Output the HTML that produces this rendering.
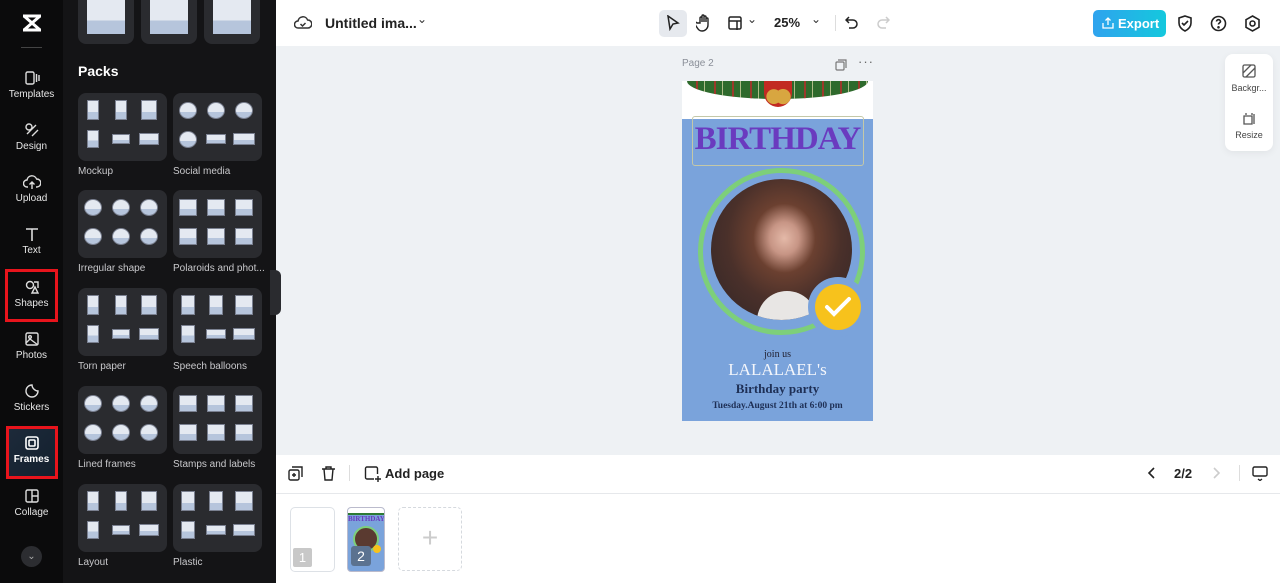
<!DOCTYPE html>
<html><head><meta charset="utf-8"><style>
*{box-sizing:border-box;margin:0;padding:0}
body{width:1280px;height:583px;overflow:hidden;font-family:"Liberation Sans",sans-serif;background:#fff;position:relative}
.rail{position:absolute;left:0;top:0;width:63px;height:583px;background:#0b0b0c}
.panel{position:absolute;left:63px;top:0;width:213px;height:583px;background:#141416}
.ri{position:absolute;left:0;width:63px;text-align:center;color:#e6e6e6;font-size:10px}
.ri svg{display:block;margin:0 auto 3px}
.card{position:absolute;width:89px;height:68px;background:#2a2b2f;border-radius:8px}
.lbl{position:absolute;color:#c9c9cc;font-size:10px;white-space:nowrap}
.m{position:absolute;background:linear-gradient(#e4e9f1 60%,#b6c5dc 60%);border:1px solid #7a8090}
.top{position:absolute;left:276px;top:0;width:1004px;height:46px;background:#fff}
.canvas{position:absolute;left:276px;top:46px;width:1004px;height:409px;background:#eef1f4}
.ic{position:absolute}
</style></head><body>
<div class="rail">
 <div class="ri" style="top:12px"><svg width="24" height="22" viewBox="0 0 24 22"><path d="M3 4h18M3 18h18M4 4l16 14M20 4L4 18" stroke="#fff" stroke-width="3" fill="none"/></svg></div>
 <div style="position:absolute;left:21px;top:47px;width:21px;height:1px;background:#444"></div>
 <div class="ri" style="top:70px"><svg width="16" height="16" viewBox="0 0 16 16" fill="none" stroke="#ddd" stroke-width="1.4"><rect x="2" y="2" width="8" height="12" rx="1.5"/><path d="M12.5 4v8M15 5v6"/></svg>Templates</div>
 <div class="ri" style="top:122px"><svg width="16" height="16" viewBox="0 0 16 16" fill="none" stroke="#ddd" stroke-width="1.4"><circle cx="5" cy="5" r="3"/><path d="M8 14l6-6M3 12l9-9"/></svg>Design</div>
 <div class="ri" style="top:174px"><svg width="18" height="16" viewBox="0 0 18 16" fill="none" stroke="#ddd" stroke-width="1.4"><path d="M5 13H4a3.5 3.5 0 010-7 5 5 0 019.6-1A3.5 3.5 0 0114 13h-1M9 8v7M6.5 10.5L9 8l2.5 2.5"/></svg>Upload</div>
 <div class="ri" style="top:226px"><svg width="16" height="16" viewBox="0 0 16 16" fill="none" stroke="#ddd" stroke-width="1.6"><path d="M2 3h12M8 3v12"/></svg>Text</div>
 <div style="position:absolute;left:5px;top:269px;width:53px;height:53px;border:3px solid #e8141c"></div>
 <div class="ri" style="top:279px"><svg width="16" height="16" viewBox="0 0 16 16" fill="none" stroke="#ddd" stroke-width="1.4"><circle cx="6" cy="6" r="3.5"/><path d="M10 3h4v6M8 14l3-6 3 6z"/></svg>Shapes</div>
 <div class="ri" style="top:331px"><svg width="16" height="16" viewBox="0 0 16 16" fill="none" stroke="#ddd" stroke-width="1.4"><rect x="2" y="2" width="12" height="12" rx="1.5"/><circle cx="6" cy="6" r="1.3"/><path d="M2 12l4-4 8 6"/></svg>Photos</div>
 <div class="ri" style="top:383px"><svg width="16" height="16" viewBox="0 0 16 16" fill="none" stroke="#ddd" stroke-width="1.4"><path d="M14 8a6 6 0 11-6-6c0 3 3 6 6 6z"/></svg>Stickers</div>
 <div style="position:absolute;left:6px;top:426px;width:52px;height:53px;border:3px solid #e8141c;background:linear-gradient(135deg,#1d2a3a,#13202e)"></div>
 <div class="ri" style="top:435px;color:#fff;font-weight:bold"><svg width="16" height="16" viewBox="0 0 16 16" fill="none" stroke="#fff" stroke-width="1.6"><rect x="2" y="2" width="12" height="12" rx="2"/><rect x="5" y="5" width="6" height="6" rx="1"/></svg>Frames</div>
 <div class="ri" style="top:488px"><svg width="16" height="16" viewBox="0 0 16 16" fill="none" stroke="#ddd" stroke-width="1.4"><rect x="2" y="2" width="12" height="12" rx="1.5"/><path d="M8 2v12M8 8h6"/></svg>Collage</div>
 <div style="position:absolute;left:21px;top:546px;width:21px;height:21px;border-radius:50%;background:#2c2d31;color:#aaa;font-size:10px;text-align:center;line-height:21px">⌄</div>
</div>
<div class="panel">
 <div class="card" style="left:15px;top:-24px;width:56px"></div><div class="card" style="left:78px;top:-24px;width:56px"></div><div class="card" style="left:141px;top:-24px;width:56px"></div>
 <div class="m" style="left:24px;top:0;width:38px;height:34px;border:none"></div><div class="m" style="left:87px;top:0;width:38px;height:34px;border:none"></div><div class="m" style="left:150px;top:0;width:38px;height:34px;border:none"></div>
 <div style="position:absolute;left:15px;top:63px;color:#fff;font-weight:bold;font-size:14px">Packs</div>
 <div id="cards"></div>
</div>
<div class="top">
 <svg class="ic" style="left:18px;top:15px" width="18" height="16" viewBox="0 0 18 16" fill="none" stroke="#333" stroke-width="1.5"><path d="M5 13H4a3.5 3.5 0 010-7 5 5 0 019.6-1A3.5 3.5 0 0114 13zM6.5 9l2 2 3-3"/></svg>
 <div style="position:absolute;left:49px;top:15px;font-size:14px;font-weight:bold;color:#222">Untitled ima...</div>
 <div style="position:absolute;left:141px;top:12px;font-size:12px;color:#333">⌄</div>
 <div style="position:absolute;left:383px;top:10px;width:28px;height:27px;background:#e6e9ee;border-radius:5px"></div>
 <svg class="ic" style="left:390px;top:15px" width="14" height="16" viewBox="0 0 14 16" fill="none" stroke="#222" stroke-width="1.5"><path d="M2 1l10 7-5 1-3 5z"/></svg>
 <svg class="ic" style="left:420px;top:14px" width="16" height="18" viewBox="0 0 16 18" fill="none" stroke="#222" stroke-width="1.4"><path d="M4 9V4a1 1 0 012 0v4V2a1 1 0 012 0v6V3a1 1 0 012 0v5V5a1 1 0 012 0v6a6 6 0 01-6 6c-3 0-4-2-6-5l-1-2a1 1 0 012-1z"/></svg>
 <svg class="ic" style="left:452px;top:16px" width="14" height="14" viewBox="0 0 14 14" fill="none" stroke="#222" stroke-width="1.5"><rect x="1" y="1" width="12" height="12" rx="1.5"/><path d="M1 5h12M9 5v13"/></svg>
 <div style="position:absolute;left:471px;top:12px;font-size:12px;color:#333">⌄</div>
 <div style="position:absolute;left:498px;top:15px;font-size:13px;font-weight:bold;color:#222">25%</div>
 <div style="position:absolute;left:535px;top:12px;font-size:12px;color:#333">⌄</div>
 <div style="position:absolute;left:559px;top:15px;width:1px;height:16px;background:#ddd"></div>
 <svg class="ic" style="left:569px;top:16px" width="14" height="14" viewBox="0 0 14 14" fill="none" stroke="#222" stroke-width="1.5"><path d="M4 1L1 4l3 3M1 4h7a4 4 0 010 8H4"/></svg>
 <svg class="ic" style="left:600px;top:16px" width="14" height="14" viewBox="0 0 14 14" fill="none" stroke="#ccc" stroke-width="1.5"><path d="M10 1l3 3-3 3M13 4H6a4 4 0 000 8h4"/></svg>
 <div style="position:absolute;left:817px;top:10px;width:73px;height:27px;border-radius:5px;background:linear-gradient(90deg,#2fa3ee,#14c8dd);color:#fff;font-weight:bold;font-size:13px;line-height:27px;padding-left:25px">Export</div>
 <svg class="ic" style="left:826px;top:17px" width="12" height="12" viewBox="0 0 12 12" fill="none" stroke="#fff" stroke-width="1.3"><path d="M1 6v5h10V6M6 8V1M3.5 3.5L6 1l2.5 2.5"/></svg>
 <svg class="ic" style="left:901px;top:15px" width="16" height="17" viewBox="0 0 16 17" fill="none" stroke="#222" stroke-width="1.6"><path d="M8 1l6 2v5c0 4-3 6.5-6 8-3-1.5-6-4-6-8V3zM5 8l2 2 4-4"/></svg>
 <svg class="ic" style="left:934px;top:15px" width="17" height="17" viewBox="0 0 17 17" fill="none" stroke="#222" stroke-width="1.6"><circle cx="8.5" cy="8.5" r="7"/><path d="M6.5 6.5a2 2 0 114 .3c-.5 1-2 1.2-2 2.7"/><circle cx="8.5" cy="12.3" r=".5" fill="#222"/></svg>
 <svg class="ic" style="left:968px;top:15px" width="17" height="17" viewBox="0 0 17 17" fill="none" stroke="#222" stroke-width="1.6"><path d="M8.5 1l6.5 3.7v7.6L8.5 16 2 12.3V4.7z"/><circle cx="8.5" cy="8.5" r="2.5"/></svg>
</div>
<div class="canvas">
 <div style="position:absolute;left:406px;top:12px;font-size:10px;color:#8a8f98">Page 2</div>
 <svg class="ic" style="left:559px;top:13px" width="12" height="12" viewBox="0 0 12 12" fill="none" stroke="#777" stroke-width="1.2"><rect x="1" y="3" width="8" height="8" rx="1"/><path d="M3 1h8v8"/></svg>
 <div style="position:absolute;left:582px;top:8px;font-size:13px;color:#666;letter-spacing:1px">···</div>
 <div style="position:absolute;left:406px;top:35px;width:191px;height:340px;background:#7aa3db;overflow:hidden">
  <div style="position:absolute;left:0;top:0;width:191px;height:38px;background:#fff"></div>
  <div style="position:absolute;left:5px;top:0;width:181px;height:18px;background:#2e6a2c;border-radius:0 0 50% 50%/0 0 100% 100%"></div>
  <div style="position:absolute;left:5px;top:0;width:181px;height:18px;background:repeating-linear-gradient(90deg,transparent 0 9px,#c8242a 9px 11px,transparent 11px 17px,#e8e0b0 17px 18px);opacity:.7;border-radius:0 0 50% 50%/0 0 100% 100%"></div>
  <div style="position:absolute;left:82px;top:0;width:28px;height:26px;border-radius:0 0 14px 14px;background:radial-gradient(circle at 35% 60%,#d8a640 0 30%,transparent 32%),radial-gradient(circle at 68% 60%,#d8a640 0 30%,transparent 32%),#c22a22"></div>
  <div style="position:absolute;left:10px;top:35px;width:172px;height:50px;border:1px solid #c4c8a8;border-radius:3px"></div>
  <div style="position:absolute;left:0;top:40px;width:191px;text-align:center;font-family:'Liberation Serif',serif;font-size:33px;font-weight:bold;color:#6a3bbf;letter-spacing:-1px">BIRTHDAY</div>
  <div style="position:absolute;left:16px;top:87px;width:167px;height:167px;border-radius:50%;border:5px solid #7dcf7a"></div>
  <div style="position:absolute;left:29px;top:98px;width:141px;height:141px;border-radius:50%;overflow:hidden;background:radial-gradient(ellipse at 52% 42%,#e4b9a8 0,#c79585 14%,#6b4030 30%,#4a302a 55%,#3b2a28 80%)">
   <div style="position:absolute;left:46px;top:112px;width:60px;height:40px;background:#e8e6e4;border-radius:30px 30px 0 0"></div>
  </div>
  <div style="position:absolute;left:126px;top:196px;width:60px;height:60px;border-radius:50%;background:#7aa3db"></div>
  <div style="position:absolute;left:133px;top:203px;width:46px;height:46px;border-radius:50%;background:#f7c21c"></div>
  <svg class="ic" style="left:142px;top:214px" width="28" height="24" viewBox="0 0 28 24" fill="none" stroke="#fff" stroke-width="4" stroke-linecap="round"><path d="M3 12l7 7L25 4"/></svg>
  <div style="position:absolute;left:0;top:268px;width:191px;text-align:center;font-family:'Liberation Serif',serif;color:#223;font-size:10px">join us</div>
  <div style="position:absolute;left:0;top:279px;width:191px;text-align:center;font-family:'Liberation Serif',serif;color:#f4f6fb;font-size:17px">LALALAEL's</div>
  <div style="position:absolute;left:0;top:300px;width:191px;text-align:center;font-family:'Liberation Serif',serif;color:#1e2f55;font-size:13px;font-weight:bold">Birthday party</div>
  <div style="position:absolute;left:0;top:320px;width:191px;text-align:center;font-family:'Liberation Serif',serif;color:#1e2f55;font-size:9.5px;font-weight:bold">Tuesday.August 21th at 6:00 pm</div>
 </div>
 <div style="position:absolute;left:949px;top:8px;width:48px;height:97px;background:#fff;border-radius:8px;box-shadow:0 2px 8px rgba(0,0,0,.06)"></div>
 <svg class="ic" style="left:966px;top:18px" width="14" height="14" viewBox="0 0 14 14" fill="none" stroke="#555" stroke-width="1.3"><rect x="1" y="1" width="12" height="12" rx="1.5"/><path d="M1 9l8-8M4 13l9-9"/></svg>
 <div style="position:absolute;left:949px;top:37px;width:48px;text-align:center;font-size:9px;color:#444">Backgr...</div>
 <svg class="ic" style="left:966px;top:66px" width="14" height="14" viewBox="0 0 14 14" fill="none" stroke="#555" stroke-width="1.3"><path d="M2 4h8v8H2zM12 2v10M4 1v2M10 1v2"/></svg>
 <div style="position:absolute;left:949px;top:84px;width:48px;text-align:center;font-size:9px;color:#444">Resize</div>
 <div style="position:absolute;left:-6px;top:224px;width:11px;height:45px;background:#2a2b2f;border-radius:0 6px 6px 0"></div>
</div>
<div style="position:absolute;left:276px;top:493px;width:1004px;height:1px;background:#e6e8eb"></div>
<svg class="ic" style="left:288px;top:466px" width="15" height="15" viewBox="0 0 15 15" fill="none" stroke="#222" stroke-width="1.4"><rect x="1" y="4" width="10" height="10" rx="1.5"/><path d="M4 1h10v10M6 7v4M4 9h4"/></svg>
<svg class="ic" style="left:321px;top:466px" width="15" height="15" viewBox="0 0 15 15" fill="none" stroke="#222" stroke-width="1.4"><path d="M1 3h13M5 3V1h5v2M3 3l1 11h7l1-11"/></svg>
<div style="position:absolute;left:349px;top:465px;width:1px;height:16px;background:#ddd"></div>
<svg class="ic" style="left:364px;top:465px" width="17" height="17" viewBox="0 0 17 17" fill="none" stroke="#222" stroke-width="1.4"><path d="M10 14H3a1.5 1.5 0 01-1.5-1.5v-9A1.5 1.5 0 013 2h9a1.5 1.5 0 011.5 1.5V9M14 11v6M11 14h6"/></svg>
<div style="position:absolute;left:385px;top:466px;font-size:13px;font-weight:bold;color:#222">Add page</div>
<svg class="ic" style="left:1147px;top:466px" width="10" height="14" viewBox="0 0 10 14" fill="none" stroke="#222" stroke-width="1.6"><path d="M7 2L2 7l5 5"/></svg>
<div style="position:absolute;left:1174px;top:466px;font-size:13px;font-weight:bold;color:#222">2/2</div>
<svg class="ic" style="left:1211px;top:466px" width="10" height="14" viewBox="0 0 10 14" fill="none" stroke="#ccc" stroke-width="1.6"><path d="M3 2l5 5-5 5"/></svg>
<div style="position:absolute;left:1239px;top:465px;width:1px;height:16px;background:#ddd"></div>
<svg class="ic" style="left:1252px;top:465px" width="16" height="16" viewBox="0 0 16 16" fill="none" stroke="#222" stroke-width="1.4"><rect x="1" y="2" width="14" height="9" rx="1.5"/><path d="M6 14l2 1.5 2-1.5"/></svg>
<div style="position:absolute;left:290px;top:507px;width:45px;height:65px;border:1px solid #dde1e6;border-radius:5px"></div>
<div style="position:absolute;left:293px;top:548px;width:19px;height:19px;background:#c8c8c8;border-radius:2px;color:#fff;font-size:13px;text-align:center;line-height:19px">1</div>
<div style="position:absolute;left:347px;top:507px;width:38px;height:65px;border:1px solid #bbc;border-radius:4px;background:#7aa3db;overflow:hidden">
 <div style="height:7px;background:#fff;border-bottom:2px solid #2d7a33"></div>
 <div style="font-family:'Liberation Serif',serif;font-size:7px;color:#6a3bbf;text-align:center;font-weight:bold">BIRTHDAY</div>
 <div style="position:absolute;left:5px;top:18px;width:26px;height:26px;border-radius:50%;border:2px solid #7dcf7a;background:#5a3a30"></div>
 <div style="position:absolute;left:25px;top:37px;width:8px;height:8px;border-radius:50%;background:#f7c21c"></div>
</div>
<div style="position:absolute;left:351px;top:546px;width:20px;height:20px;background:#5b7290;border-radius:3px;color:#fff;font-size:14px;text-align:center;line-height:20px">2</div>
<div style="position:absolute;left:398px;top:507px;width:64px;height:64px;border:1px dashed #d5d9de;border-radius:5px;color:#ccc;font-size:28px;text-align:center;line-height:60px;font-weight:300">+</div>
<script>
var P=document.getElementById('cards');
var cols=[15,110],rows=[93,190,288,386,484];
var names=[["Mockup","Social media"],["Irregular shape","Polaroids and photo..."],["Torn paper","Speech balloons"],["Lined frames","Stamps and labels"],["Layout","Plastic"]];
var h='';
for(var r=0;r<5;r++)for(var c=0;c<2;c++){
 var x=cols[c],y=rows[r];
 h+='<div class="card" style="left:'+x+'px;top:'+y+'px"></div>';
 var sz=[[12,20],[12,20],[16,20],[12,18],[18,10],[20,12]];
 for(var i=0;i<6;i++){
  var cx=x+15+(i%3)*28,cy=y+17+Math.floor(i/3)*29,w=sz[i][0]+(c*2),hh=sz[i][1];
  if(r==1||r==3||(r==0&&c==1&&i<4)){w=18;hh=17;}
  var rad=(r==3&&c==0)||(r==0&&c==1&&i<4)||(r==1&&c==0)?'border-radius:50%;':'';
  h+='<div class="m" style="'+rad+'left:'+(cx-w/2)+'px;top:'+(cy-hh/2)+'px;width:'+w+'px;height:'+hh+'px"></div>';
 }
 h+='<div class="lbl" style="left:'+x+'px;top:'+(y+73)+'px">'+(names[r][c].length>20?names[r][c].slice(0,18)+'...':names[r][c])+'</div>';
}
P.innerHTML=h;
</script>
</body></html>
